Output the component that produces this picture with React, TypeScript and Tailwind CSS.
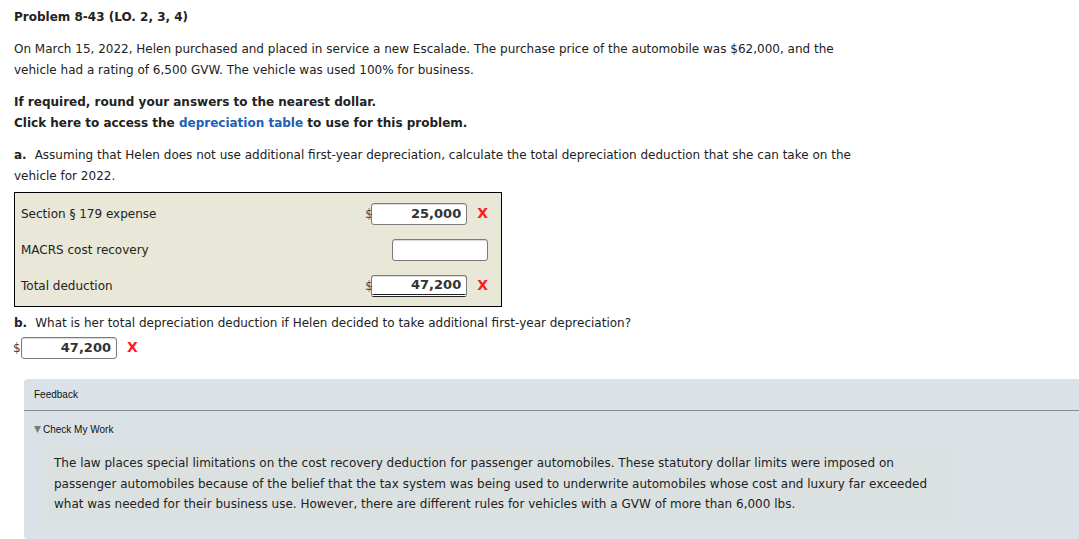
import React from 'react'

const font = "font-['DejaVu_Sans',Verdana,sans-serif]"

const RedX = () => <span className="text-[#ff1a1a] font-bold text-[14px] leading-none">X</span>

const AmountInput = ({ value, total }: { value?: string; total?: boolean }) => (
    <div
        className={`w-[96px] h-[22px] bg-white border border-[#7b7b7b] rounded-[3px] shadow-[inset_0_1px_1px_rgba(0,0,0,0.15)] flex items-center justify-end px-[5px] text-[13px] font-bold text-[#333] ${total ? 'border-b-[3px] border-b-[#222] border-double' : ''}`}
    >
        {value}
    </div>
)

const Row = ({ label, value, total, empty }: { label: string; value?: string; total?: boolean; empty?: boolean }) => (
    <div className="flex items-center h-[36px]">
        <div className="flex-1 text-[12px] text-[#222]">{label}</div>
        {empty ? (
            <div className="w-[96px] h-[22px] bg-white border border-[#7b7b7b] rounded-[3px] shadow-[inset_0_1px_1px_rgba(0,0,0,0.15)]" />
        ) : (
            <div className="flex items-center">
                <span className="text-[12px] text-[#444] w-[6px]">$</span>
                <AmountInput value={value} total={total} />
                <span className="ml-[10px]"><RedX /></span>
            </div>
        )}
    </div>
)

export default function App() {
    return (
        <div className={`${font} bg-white min-h-[539px] text-[#222] text-[12px] overflow-hidden`}>
            <div className="pl-[14px] pt-[9px]">
                <div className="font-bold text-[12px] leading-[17px]">Problem 8-43 (LO. 2, 3, 4)</div>

                <p className="mt-[13px] leading-[21px] w-[830px]">
                    On March 15, 2022, Helen purchased and placed in service a new Escalade. The purchase price of the automobile was $62,000, and the vehicle had a rating of 6,500 GVW. The vehicle was used 100% for business.
                </p>

                <div className="mt-[11px] font-bold leading-[21px]">
                    <div>If required, round your answers to the nearest dollar.</div>
                    <div>
                        Click here to access the <span className="text-[#1d5fb5]">depreciation table</span> to use for this problem.
                    </div>
                </div>

                <p className="mt-[11px] leading-[21px] w-[850px]">
                    <span className="font-bold mr-[8px]">a.</span>
                    <span>Assuming that Helen does not use additional first-year depreciation, calculate the total depreciation deduction that she can take on the vehicle for 2022.</span>
                </p>

                <div className="mt-[5px] w-[488px] border border-black bg-[#e8e7d8] pl-[6px] pr-[13px] pt-[3px] pb-[2px]">
                    <Row label="Section § 179 expense" value="25,000" />
                    <Row label="MACRS cost recovery" empty />
                    <Row label="Total deduction" value="47,200" total />
                </div>

                <p className="mt-[6px] leading-[21px]">
                    <span className="font-bold mr-[8px]">b.</span>
                    <span>What is her total depreciation deduction if Helen decided to take additional first-year depreciation?</span>
                </p>
                <div className="flex items-center mt-[3px] -ml-[1px]">
                    <span className="text-[12px] text-[#444] w-[8px]">$</span>
                    <AmountInput value="47,200" />
                    <span className="ml-[10px]"><RedX /></span>
                </div>
            </div>

            <div className="ml-[24px] mt-[20px] bg-[#dae1e7] rounded-l-[4px] h-[160px] pt-[10px] font-['Liberation_Sans',Arial,sans-serif]">
                <div className="pl-[10px] text-[10px] text-[#111] leading-[12px]">Feedback</div>
                <div className="mt-[9px] border-t border-[#8a8c8c]" />
                <div className="pl-[10px] mt-[13px] text-[10px] text-[#111] leading-[12px] flex items-center">
                    <svg width="7" height="7" viewBox="0 0 7 7" className="mr-[2px] -mt-[1px]">
                        <path d="M0 0 H7 L3.5 7 Z" fill="#7a7a7a" />
                    </svg>
                    Check My Work
                </div>
                <div className={`${font} ml-[18px] mt-[7px] w-[913px] bg-[#dbe1e1] px-[12px] py-[10px] text-[12px] text-[#222] leading-[20.5px]`}>
                    The law places special limitations on the cost recovery deduction for passenger automobiles. These statutory dollar limits were imposed on passenger automobiles because of the belief that the tax system was being used to underwrite automobiles whose cost and luxury far exceeded what was needed for their business use. However, there are different rules for vehicles with a GVW of more than 6,000 lbs.
                </div>
            </div>
        </div>
    )
}
